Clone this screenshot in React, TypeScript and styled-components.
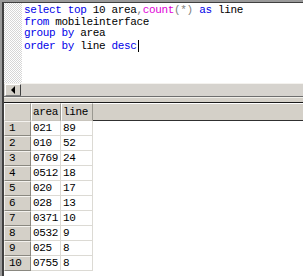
import * as React from 'react'
import styled, { createGlobalStyle } from 'styled-components'

const Global = createGlobalStyle`
  html, body {
    margin: 0;
    padding: 0;
    background: #fff;
    overflow: hidden;
  }
  * {
    box-sizing: border-box;
  }
`

const mono = `'Liberation Mono', 'DejaVu Sans Mono', monospace`

const Window = styled.div`
  width: 303px;
  height: 276px;
  display: flex;
  flex-direction: column;
  border-left: 2px solid #9a9a9a;
  border-top: 2px solid #9a9a9a;
  background: #fff;
  overflow: hidden;
`

const Inner = styled.div`
  flex: 1;
  display: flex;
  flex-direction: column;
  border-left: 2px solid #404040;
  border-top: 1px solid #404040;
  min-height: 0;
`

const Editor = styled.div`
  height: 80px;
  display: flex;
`

const Gutter = styled.div`
  width: 18px;
  background: repeating-conic-gradient(#d6d6d6 0 25%, #fff 0 50%) 0 0 / 2px 2px;
`

const Code = styled.pre`
  margin: 0;
  flex: 1;
  padding: 2px 0 0 2px;
  font-family: ${mono};
  font-size: 11px;
  letter-spacing: -0.35px;
  line-height: 11.5px;
  color: #000;
`

const Kw = styled.span`
  color: #0000e8;
`

const Fn = styled.span`
  color: #e000d8;
`

const Op = styled.span`
  color: #808080;
`

const Caret = styled.span`
  display: inline-block;
  width: 1px;
  height: 12px;
  background: #000;
  vertical-align: -3px;
  margin-left: 1px;
`

const HScroll = styled.div`
  height: 14px;
  display: flex;
  background: #d6d3ce;
  border-top: 1px solid #f4f2ee;
  border-bottom: 1px solid #6e6e6e;
`

const ScrollButton = styled.div`
  width: 16px;
  height: 12px;
  margin-left: 1px;
  display: flex;
  align-items: center;
  justify-content: center;
  background: #d4d0c8;
  border-top: 1px solid #fff;
  border-left: 1px solid #fff;
  border-right: 1px solid #404040;
  border-bottom: 1px solid #808080;
`

const ArrowLeft = styled.div`
  width: 0;
  height: 0;
  border-top: 4px solid transparent;
  border-bottom: 4px solid transparent;
  border-right: 4px solid #000;
`

const Splitter = styled.div`
  height: 6px;
  background: #d4d0c8;
  border-top: 1px solid #f0eee8;
  border-bottom: 1px solid #1a1a1a;
`

const Grid = styled.div`
  display: grid;
  grid-template-columns: 27px 30px 32px 1fr;
  grid-template-rows: 18px;
  grid-auto-rows: 15px;
  font-family: ${mono};
  font-size: 11px;
  letter-spacing: -0.35px;
  line-height: 13px;
  color: #000;
`

const HeadCell = styled.div<{ $filler?: boolean }>`
  background: #d4d0c8;
  padding: 2px 0 0 1px;
  border-top: 1px solid #fff;
  border-left: ${p => (p.$filler ? 'none' : '1px solid #fff')};
  border-right: ${p => (p.$filler ? 'none' : '1px solid #9a9890')};
  border-bottom: 1px solid ${p => (p.$filler ? '#303030' : '#c8c4bc')};
`

const RowHead = styled.div`
  background: #d4d0c8;
  padding: 0 0 0 4px;
  border-top: 1px solid #f4f2ee;
  border-left: 1px solid #f4f2ee;
  border-right: 1px solid #8a8880;
  border-bottom: 1px solid #8a8880;
`

const Cell = styled.div`
  padding: 1px 0 0 2px;
  background: #fff;
  border-right: 1px solid #dcdad4;
  border-bottom: 1px solid #dcdad4;
`

const Empty = styled.div`
  background: #fff;
`

const rows: [string, string][] = [
  ['021', '89'],
  ['010', '52'],
  ['0769', '24'],
  ['0512', '18'],
  ['020', '17'],
  ['028', '13'],
  ['0371', '10'],
  ['0532', '9'],
  ['025', '8'],
  ['0755', '8'],
]

const App = () => (
  <>
    <Global />
    <Window>
      <Inner>
        <Editor>
          <Gutter />
          <Code>
            <Kw>select</Kw> <Kw>top</Kw> 10 area<Op>,</Op>
            <Fn>count</Fn>
            <Op>(*)</Op> <Kw>as</Kw> line{'\n'}
            <Kw>from</Kw> mobileinterface{'\n'}
            <Kw>group</Kw> <Kw>by</Kw> area{'\n'}
            <Kw>order</Kw> <Kw>by</Kw> line <Kw>desc</Kw>
            <Caret />
          </Code>
        </Editor>
        <HScroll>
          <ScrollButton>
            <ArrowLeft />
          </ScrollButton>
        </HScroll>
        <Splitter />
        <Grid>
          <HeadCell />
          <HeadCell>area</HeadCell>
          <HeadCell>line</HeadCell>
          <HeadCell $filler />
          {rows.map(([area, line], i) => (
            <React.Fragment key={i}>
              <RowHead>{i + 1}</RowHead>
              <Cell>{area}</Cell>
              <Cell>{line}</Cell>
              <Empty />
            </React.Fragment>
          ))}
        </Grid>
      </Inner>
    </Window>
  </>
)

export default App
